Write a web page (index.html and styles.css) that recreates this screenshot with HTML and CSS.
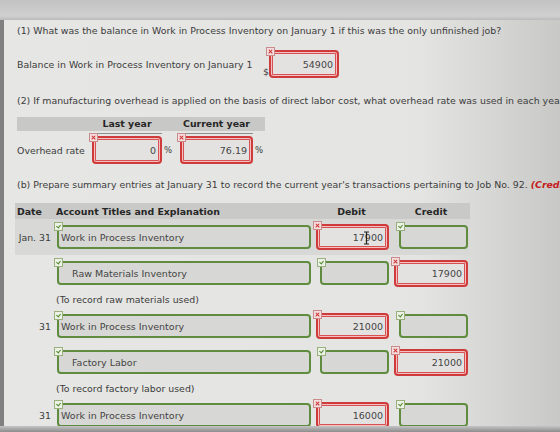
FILE: index.html
```html
<!DOCTYPE html>
<html lang="en">
<head>
<meta charset="utf-8">
<title>Job Order Costing</title>
<link rel="stylesheet" href="styles.css">
</head>
<body>
<div class="screen">
  <div class="topbar"></div>
  <main class="panel">
    <p class="q q1">(1) What was the balance in Work in Process Inventory on January 1 if this was the only unfinished job?</p>
    <div class="balance">
      <span class="lbl">Balance in Work in Process Inventory on January 1</span>
      <span class="cur">$</span>
      <div class="ans bad w-bal"><i class="mark x"></i>54900</div>
    </div>

    <p class="q q2">(2) If manufacturing overhead is applied on the basis of direct labor cost, what overhead rate was used in each year?</p>
    <div class="rate-head">
      <span class="rh-lbl"></span>
      <span class="rh rh-last">Last year</span>
      <span class="rh-gap"></span>
      <span class="rh rh-cur">Current year</span>
    </div>
    <div class="rate-row">
      <span class="rr-lbl">Overhead rate</span>
      <div class="ans bad w-last"><i class="mark x"></i>0</div>
      <span class="pct">%</span>
      <div class="ans bad w-cur"><i class="mark x"></i>76.19</div>
      <span class="pct">%</span>
    </div>

    <p class="q qb">(b) Prepare summary entries at January 31 to record the current year's transactions pertaining to Job No. 92. <em class="hint">(Credit account titles are automatically indented when amount is entered. Do not indent manually.)</em></p>

    <div class="journal">
      <div class="j-head">
        <span class="c-date">Date</span>
        <span class="c-acct">Account Titles and Explanation</span>
        <span class="c-dr">Debit</span>
        <span class="c-cr">Credit</span>
      </div>

      <div class="j-row shade">
        <span class="c-date">Jan. 31</span>
        <div class="c-acct"><div class="fld ok acct"><i class="mark v"></i>Work in Process Inventory</div></div>
        <div class="c-dr"><div class="ans bad amt-r"><i class="mark x"></i>17900<svg class="ibeam" width="7" height="14" viewBox="0 0 7 14"><path d="M1 1h5M3.5 1v12M1 13h5" stroke="#222" stroke-width="1.2" fill="none"/></svg></div></div>
        <div class="c-cr"><div class="fld ok amt-g"><i class="mark v"></i></div></div>
      </div>
      <div class="j-row">
        <span class="c-date"></span>
        <div class="c-acct"><div class="fld ok acct indent"><i class="mark v"></i>Raw Materials Inventory</div></div>
        <div class="c-dr"><div class="fld ok amt-g"><i class="mark v"></i></div></div>
        <div class="c-cr"><div class="ans bad amt-r cr"><i class="mark x"></i>17900</div></div>
      </div>
      <div class="j-note"><span class="c-date"></span><span class="c-acct">(To record raw materials used)</span></div>

      <div class="j-row">
        <span class="c-date">31</span>
        <div class="c-acct"><div class="fld ok acct"><i class="mark v"></i>Work in Process Inventory</div></div>
        <div class="c-dr"><div class="ans bad amt-r"><i class="mark x"></i>21000</div></div>
        <div class="c-cr"><div class="fld ok amt-g"><i class="mark v"></i></div></div>
      </div>
      <div class="j-row">
        <span class="c-date"></span>
        <div class="c-acct"><div class="fld ok acct indent"><i class="mark v"></i>Factory Labor</div></div>
        <div class="c-dr"><div class="fld ok amt-g"><i class="mark v"></i></div></div>
        <div class="c-cr"><div class="ans bad amt-r cr"><i class="mark x"></i>21000</div></div>
      </div>
      <div class="j-note"><span class="c-date"></span><span class="c-acct">(To record factory labor used)</span></div>

      <div class="j-row">
        <span class="c-date">31</span>
        <div class="c-acct"><div class="fld ok acct"><i class="mark v"></i>Work in Process Inventory</div></div>
        <div class="c-dr"><div class="ans bad amt-r"><i class="mark x"></i>16000</div></div>
        <div class="c-cr"><div class="fld ok amt-g"><i class="mark v"></i></div></div>
      </div>
    </div>
  </main>
  <div class="bottombar"></div>
</div>
</body>
</html>
```

FILE: styles.css
```css
* { box-sizing: border-box; }

html, body {
  margin: 0;
  width: 560px;
  height: 432px;
  overflow: hidden;
}

body {
  font-family: "DejaVu Sans", Verdana, sans-serif;
  font-size: 9.4px;
  color: #3c3c3c;
  background: linear-gradient(to right, #e6e6e4 0%, #e4e4e2 75%, #d6d6d4 88%, #c8c8c6 100%);
}

.screen {
  display: flex;
  flex-direction: column;
  height: 432px;
}

.topbar {
  height: 20px;
  flex: none;
  background: linear-gradient(to bottom, #c2c2c2, #d0d0d0 80%, #bababa);
}

.bottombar {
  height: 6px;
  flex: none;
  background: linear-gradient(to bottom, #c4c4c4, #8c8c8c);
}

.panel {
  flex: 1;
  overflow: hidden;
  border-left: 4px solid #808080;
  padding-left: 13px;
  white-space: nowrap;
}

.q {
  margin: 0;
  line-height: 14px;
}
.q1 { padding-top: 4px; }
.q2 { margin-top: 16px; }
.qb { margin-top: 14px; }

.hint {
  color: #c41a1a;
  font-weight: bold;
}

/* answer boxes */
.ans, .fld {
  position: relative;
  display: flex;
  align-items: center;
  justify-content: flex-end;
  border-radius: 4px;
  color: #444;
  font-size: 9.5px;
}

.ans.bad {
  border: 2px solid #cf3a3a;
  box-shadow: inset 0 0 0 1px #f2c0c0, inset 0 0 0 2px #d95050;
  background: #e3e2e1;
  padding-right: 4px;
}

.fld.ok {
  border: 2px solid #5f8c3f;
  background: #d7d7d5;
  padding-right: 4px;
}

.mark {
  position: absolute;
  left: -5px;
  top: -5px;
  width: 9px;
  height: 9px;
  border: 1px solid #c98b8b;
  background: #f4dede;
}
.mark.x::before,
.mark.x::after {
  content: "";
  position: absolute;
  left: 1px;
  top: 3px;
  width: 5px;
  height: 1.2px;
  background: #d02828;
  transform: rotate(45deg);
}
.mark.x::after { transform: rotate(-45deg); }

.mark.v {
  border-color: #97b07c;
  background: #edf1e6;
}
.mark.v::before {
  content: "";
  position: absolute;
  left: 2px;
  top: 1px;
  width: 2px;
  height: 3px;
  border-right: 1.2px solid #4e8a2c;
  border-bottom: 1.2px solid #4e8a2c;
  transform: rotate(40deg);
}

/* (1) balance */
.balance {
  display: flex;
  align-items: center;
  height: 28px;
  margin-top: 12px;
}
.lbl { width: 246px; }
.cur {
  width: 6px;
  align-self: flex-end;
  margin-bottom: 1px;
}
.w-bal { width: 70px; height: 28px; }

/* (2) overhead rate */
.rate-head {
  display: flex;
  width: 248px;
  height: 17px;
  margin-top: 9px;
  background: linear-gradient(#c8c8c6 0 14px, transparent 14px);
  font-weight: bold;
  color: #262626;
}
.rh-lbl { width: 75px; }
.rh {
  text-align: center;
  line-height: 14px;
  border-bottom: 1px solid #8e8e8e;
}
.rh-last { width: 70px; }
.rh-gap { width: 18px; }
.rh-cur { width: 73px; }

.rate-row {
  display: flex;
  align-items: center;
  height: 28px;
  margin-top: 2px;
}
.rr-lbl { width: 75px; }
.w-last { width: 70px; height: 28px; }
.w-cur { width: 73px; height: 28px; }
.pct {
  width: 18px;
  padding-left: 2px;
  font-size: 8.5px;
}
.w-cur + .pct { width: 12px; }

/* (b) journal */
.journal {
  margin-top: 11px;
  margin-left: -2px;
  width: 455px;
}

.j-head, .j-row, .j-note {
  display: grid;
  grid-template-columns: 41px 255px 81px 78px;
  align-items: center;
}

.j-head {
  height: 16px;
  background: #c9c9c7;
  font-weight: bold;
  color: #262626;
}
.j-head .c-date { padding-left: 2px; }
.j-head .c-dr, .j-head .c-cr { justify-content: center; }

.j-row { height: 36px; }
.j-row.shade { background: #d8d8d6; }

.j-note { height: 17px; }

.j-row .c-date {
  text-align: right;
  padding-right: 5px;
}

.c-acct, .c-dr, .c-cr { display: flex; }
.j-row .c-acct { padding-left: 1px; }
.j-row .c-dr { justify-content: flex-end; padding-right: 3px; }
.j-row .c-cr { justify-content: flex-end; padding-right: 2px; }

.fld.acct {
  width: 254px;
  height: 24px;
  justify-content: flex-start;
  padding-left: 2px;
}
.fld.acct.indent { padding-left: 13px; }

.amt-g { width: 69px; height: 24px; }
.amt-r { width: 73px; height: 26px; }
.amt-r.cr { width: 74px; height: 27px; }

.ibeam {
  position: absolute;
  left: 45px;
  top: 5px;
}
```
